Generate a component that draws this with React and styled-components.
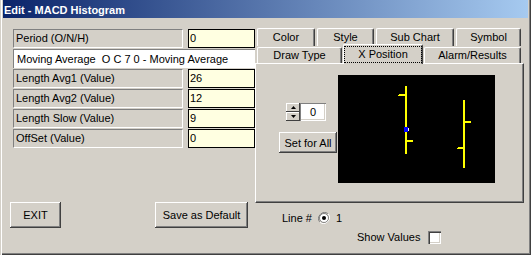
import React from "react";
import styled, { createGlobalStyle } from "styled-components";

const GlobalStyle = createGlobalStyle`
  html, body {
    margin: 0;
    padding: 0;
    background: #d4d0c8;
  }
  body {
    font-family: "Liberation Sans", Arial, sans-serif;
    font-size: 11px;
    color: #000;
  }
`;

const Window = styled.div`
  width: 531px;
  height: 255px;
  box-sizing: border-box;
  background: #d4d0c8;
  display: flex;
  flex-direction: column;
  padding: 0 3px 3px 3px;
  box-shadow: inset 1px 0 #d4d0c8, inset 2px 0 #fff, inset -1px -1px #404040,
    inset -2px -2px #808080;
`;

const TitleBar = styled.div`
  height: 18px;
  flex: none;
  box-sizing: border-box;
  padding: 2px 0 0 1px;
  display: flex;
  align-items: center;
  background: linear-gradient(to right, #0a246a, #a6caf0);
  color: #fff;
  font-weight: bold;
  font-size: 11px;
`;

const Main = styled.div`
  display: flex;
  flex: 1;
`;

const LeftCol = styled.div`
  width: 252px;
  box-sizing: border-box;
  padding: 11px 0 0 7px;
  display: flex;
  flex-direction: column;
`;

const Fields = styled.div`
  display: flex;
  flex-direction: column;
  gap: 1px;
  margin-left: 3px;
`;

const FieldRow = styled.div`
  display: flex;
  height: 19px;
  gap: 5px;
`;

const Label = styled.div`
  width: 170px;
  box-sizing: border-box;
  border-top: 1px solid #808080;
  border-left: 1px solid #808080;
  border-bottom: 1px solid #fff;
  border-right: 1px solid #fff;
  padding-left: 2px;
  line-height: 17px;
  white-space: nowrap;
`;

const Value = styled.div`
  width: 67px;
  box-sizing: border-box;
  border: 1px solid #000;
  background: #ffffe1;
  padding-left: 1px;
  line-height: 17px;
`;

const SelectRow = styled.div`
  height: 19px;
  box-sizing: border-box;
  background: #fff;
  border-top: 1px solid #808080;
  border-left: 1px solid #808080;
  padding-left: 3px;
  line-height: 18px;
  white-space: pre;
`;

const ButtonRow = styled.div`
  display: flex;
  gap: 94px;
  margin-top: 54px;
`;

const Button = styled.button`
  width: ${(p) => p.w}px;
  height: ${(p) => p.h}px;
  padding: 0;
  border: none;
  background: #d4d0c8;
  box-shadow: inset -1px -1px #404040, inset 1px 1px #fff,
    inset -2px -2px #808080;
  font-family: "Liberation Sans", Arial, sans-serif;
  font-size: 11px;
  color: #000;
`;

const RightCol = styled.div`
  width: 273px;
  padding-top: 10px;
  display: flex;
  flex-direction: column;
`;

const TabRow = styled.div`
  display: flex;
  align-items: flex-end;
  padding-left: 2px;
  height: ${(p) => p.h}px;
  gap: ${(p) => p.gap}px;
`;

const Tab = styled.div`
  width: ${(p) => p.w}px;
  height: ${(p) => (p.active ? 20 : p.h)}px;
  margin-bottom: ${(p) => (p.active ? -1 : 0)}px;
  position: ${(p) => (p.active ? "relative" : "static")};
  z-index: ${(p) => (p.active ? 1 : "auto")};
  box-sizing: border-box;
  background: #d4d0c8;
  border-top: 1px solid #fff;
  border-left: 1px solid #fff;
  border-right: 1px solid #404040;
  box-shadow: inset -1px 0 #808080;
  border-radius: 2px 2px 0 0;
  text-align: center;
  line-height: ${(p) => p.h - 1}px;
  white-space: nowrap;
`;

const Focus = styled.div`
  margin-top: 1px;
  height: 17px;
  box-sizing: border-box;
  border: 1px dotted #000;
  line-height: 14px;
`;

const Panel = styled.div`
  width: 269px;
  height: 140px;
  box-sizing: border-box;
  border-top: 1px solid #fff;
  border-left: 1px solid #fff;
  border-right: 1px solid #404040;
  border-bottom: 1px solid #404040;
  box-shadow: inset -1px -1px #808080;
  display: flex;
  padding: 11px 0 0 23px;
`;

const Controls = styled.div`
  width: 59px;
  display: flex;
  flex-direction: column;
  align-items: flex-start;
  padding-top: 28px;
  gap: 11px;
`;

const Spinner = styled.div`
  display: flex;
  margin-left: 7px;
`;

const SpinButtons = styled.div`
  display: flex;
  flex-direction: column;
`;

const SpinButton = styled.div`
  width: 14px;
  height: 9px;
  background: #d4d0c8;
  box-shadow: inset -1px -1px #404040, inset 1px 1px #fff;
  display: flex;
  align-items: center;
  justify-content: center;
`;

const SpinField = styled.div`
  width: 26px;
  height: 18px;
  box-sizing: border-box;
  background: #fff;
  box-shadow: inset 1px 1px #808080, inset -1px -1px #fff,
    inset -2px -2px #d4d0c8;
  text-align: center;
  line-height: 18px;
`;

const Preview = styled.svg`
  display: block;
  flex: none;
`;

const LineRow = styled.div`
  display: flex;
  align-items: center;
  height: 14px;
  margin-top: 8px;
  padding-left: 27px;
`;

const ShowRow = styled.div`
  display: flex;
  align-items: center;
  height: 14px;
  margin-top: 5px;
  padding-left: 102px;
`;

const Radio = styled.svg`
  display: block;
  margin: 0 6px 0 6px;
`;

const Check = styled.div`
  width: 13px;
  height: 13px;
  box-sizing: border-box;
  margin-left: 8px;
  background: #fff;
  box-shadow: inset 1px 1px #808080, inset 2px 2px #404040,
    inset -1px -1px #fff, inset -2px -2px #d4d0c8;
`;

const fields = [
  ["Length Avg1 (Value)", "26"],
  ["Length Avg2 (Value)", "12"],
  ["Length Slow (Value)", "9"],
  ["OffSet (Value)", "0"],
];

const Arrow = ({ up }) => (
  <svg width="5" height="3">
    <polygon
      points={up ? "2.5,0 5,3 0,3" : "0,0 5,0 2.5,3"}
      fill="#000"
    />
  </svg>
);

const App = () => {
  return (
    <>
      <GlobalStyle />
      <Window>
        <TitleBar>Edit - MACD Histogram</TitleBar>
        <Main>
          <LeftCol>
            <Fields>
              <FieldRow>
                <Label>Period (O/N/H)</Label>
                <Value>0</Value>
              </FieldRow>
              <SelectRow>{"Moving Average  O C 7 0 - Moving Average"}</SelectRow>
              {fields.map(([l, v]) => (
                <FieldRow key={l}>
                  <Label>{l}</Label>
                  <Value>{v}</Value>
                </FieldRow>
              ))}
            </Fields>
            <ButtonRow>
              <Button w={51} h={26}>EXIT</Button>
              <Button w={93} h={26}>Save as Default</Button>
            </ButtonRow>
          </LeftCol>
          <RightCol>
            <TabRow h={18} gap={2}>
              <Tab w={58} h={18}>Color</Tab>
              <Tab w={57} h={18}>Style</Tab>
              <Tab w={78} h={18}>Sub Chart</Tab>
              <Tab w={65} h={18}>Symbol</Tab>
            </TabRow>
            <TabRow h={17} gap={1}>
              <Tab w={85} h={16}>Draw Type</Tab>
              <Tab w={80} h={16} active>
                <Focus>X Position</Focus>
              </Tab>
              <Tab w={97} h={16}>Alarm/Results</Tab>
            </TabRow>
            <Panel>
              <Controls>
                <Spinner>
                  <SpinButtons>
                    <SpinButton><Arrow up /></SpinButton>
                    <SpinButton><Arrow /></SpinButton>
                  </SpinButtons>
                  <SpinField>0</SpinField>
                </Spinner>
                <Button w={58} h={21}>Set for All</Button>
              </Controls>
              <Preview width="157" height="108">
                <rect width="157" height="108" fill="#000" />
                <g fill="#ffff00">
                  <rect x="67" y="11" width="2" height="68" />
                  <rect x="61" y="19" width="6" height="2" />
                  <rect x="60" y="20" width="1" height="1" />
                  <rect x="69" y="65" width="6" height="2" />
                  <rect x="125" y="25" width="2" height="68" />
                  <rect x="127" y="46" width="6" height="2" />
                  <rect x="120" y="72" width="5" height="2" />
                  <rect x="119" y="73" width="1" height="1" />
                </g>
                <rect x="66" y="52" width="4" height="5" fill="#0000ff" />
                <rect x="70" y="53" width="1" height="3" fill="#fff" />
              </Preview>
            </Panel>
            <LineRow>
              Line #
              <Radio width="12" height="12" viewBox="0 0 12 12">
                <path d="M10.2 1.8 A6 6 0 0 0 1.8 10.2" fill="none" stroke="#808080" strokeWidth="1" />
                <path d="M1.8 10.2 A6 6 0 0 0 10.2 1.8" fill="none" stroke="#fff" strokeWidth="1" />
                <circle cx="6" cy="6" r="4.5" fill="#fff" stroke="#404040" strokeWidth="0.6" />
                <circle cx="6" cy="6" r="2" fill="#000" />
              </Radio>
              1
            </LineRow>
            <ShowRow>
              Show Values
              <Check />
            </ShowRow>
          </RightCol>
        </Main>
      </Window>
    </>
  );
};

export default App;
